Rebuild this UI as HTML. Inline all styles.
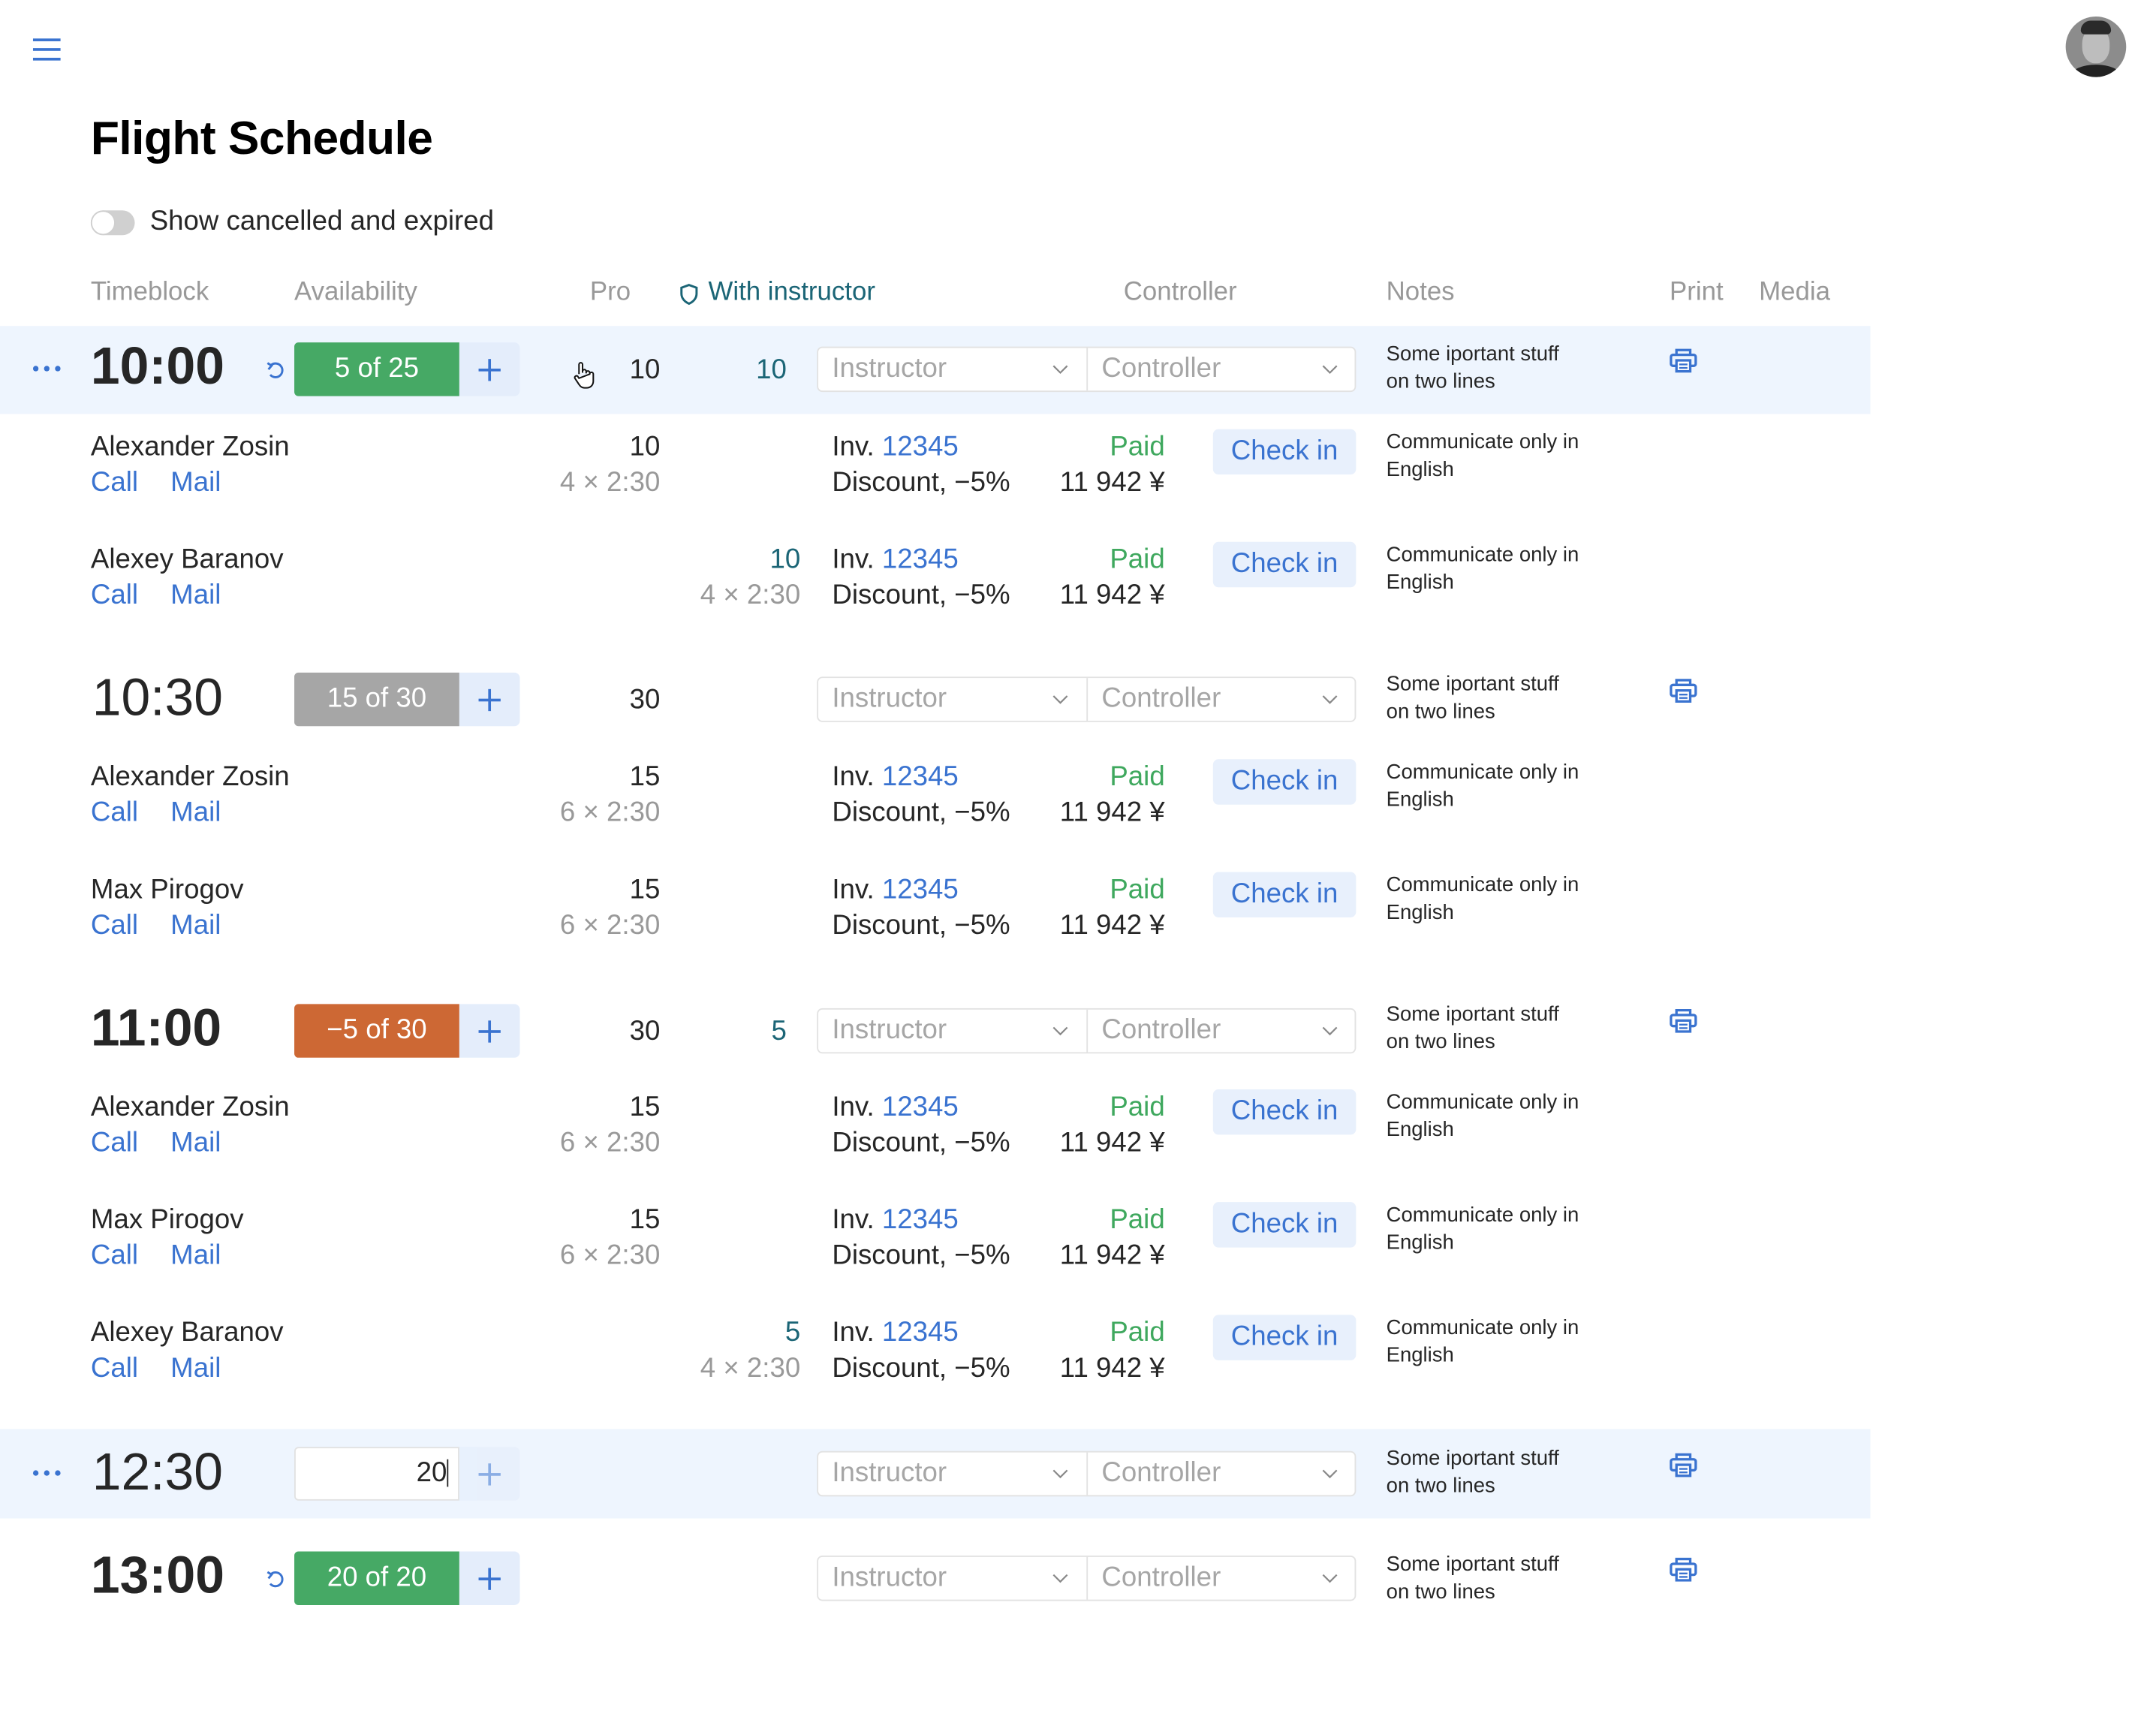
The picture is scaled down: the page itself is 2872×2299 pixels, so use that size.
<!DOCTYPE html>
<html><head><meta charset="utf-8"><style>
html,body{margin:0;padding:0;background:#fff;overflow:hidden}
body{width:2872px;height:2296px}
#w{position:absolute;left:0;top:0;width:1570px;height:1255px;transform:scale(1.832);transform-origin:0 0;font-family:"Liberation Sans",sans-serif;color:#262626}
.a{position:absolute;white-space:nowrap}
.t{position:absolute;white-space:nowrap;font-size:20px;line-height:26px}
.r{text-align:right}
.b{color:#3a73d0}
.g{color:#999}
.tl{color:#1b6576}
.band{position:absolute;left:0;width:1360px;background:#eef5fe}
.dots{position:absolute;left:24px;width:20px;height:4px}
.dots i{position:absolute;top:0;width:4px;height:4px;border-radius:50%;background:#3a73d0}
.time{position:absolute;left:66px;font-size:38px;line-height:40px;letter-spacing:0px}
.pill{position:absolute;left:214px;width:120px;height:39px;border-radius:3px 0 0 3px;color:#fff;font-size:20px;line-height:39px;text-align:center}
.plus{position:absolute;left:334px;width:44px;height:39px;background:#e4edfb;border-radius:0 4px 4px 0}
.plus:before{content:"";position:absolute;left:14px;top:18.5px;width:16px;height:2px;background:#3a73d0}
.plus:after{content:"";position:absolute;left:21px;top:11.5px;width:2px;height:16px;background:#3a73d0}
.sel{position:absolute;left:594px;width:390px;height:31px;border:1px solid #e2e2e2;border-radius:4px;background:#fff}
.sel span{position:absolute;top:2px;font-size:20px;line-height:26px;color:#a6a6a6}
.sel .dv{position:absolute;left:195px;top:0;width:1px;height:31px;background:#e2e2e2}
.sel svg{position:absolute;top:12px}
.note{position:absolute;left:1008px;font-size:15px;line-height:20px;color:#262626}
.ck{position:absolute;left:882px;width:104px;height:33px;background:#e8f0fc;border-radius:4px;color:#3a73d0;font-size:20px;line-height:33px;text-align:center}
.pr{position:absolute;left:1214px}
.rf{position:absolute;left:192px}
</style></head><body><div id="w">

<div class="a" style="left:24px;top:28px;width:20px;height:2px;background:#3a73d0"></div>
<div class="a" style="left:24px;top:35px;width:20px;height:2px;background:#3a73d0"></div>
<div class="a" style="left:24px;top:42px;width:20px;height:2px;background:#3a73d0"></div>

<div class="a" style="left:1502px;top:12px;width:44px;height:44px;border-radius:50%;background:#8c8c8c;overflow:hidden">
<div style="position:absolute;left:12px;top:8px;width:20px;height:26px;border-radius:45%;background:#bdbdbd"></div>
<div style="position:absolute;left:11px;top:3px;width:22px;height:10px;border-radius:10px 10px 4px 4px;background:#2a2a2a"></div>
<div style="position:absolute;left:4px;top:35px;width:36px;height:16px;border-radius:50%;background:#222"></div>
</div>

<div class="a" style="left:66px;top:81px;font-size:34px;line-height:40px;font-weight:bold;color:#000;letter-spacing:-0.3px">Flight Schedule</div>

<div class="a" style="left:66px;top:153px;width:32px;height:18px;border-radius:9px;background:#d0d0d0"></div>
<div class="a" style="left:66px;top:153px;width:16px;height:16px;border-radius:50%;background:#fff;border:1px solid #cfcfcf"></div>
<div class="t" style="left:109px;top:148px">Show cancelled and expired</div>

<div class="t g" style="left:66px;top:200px;font-size:19px">Timeblock</div>
<div class="t g" style="left:214px;top:200px;font-size:19px">Availability</div>
<div class="t g" style="left:429px;top:200px;font-size:19px">Pro</div>
<svg class="a" style="left:494px;top:206px" width="14" height="16" viewBox="0 0 14 16"><path d="M7 1.2 L12.5 3.2 V7.5 C12.5 11 10 13.5 7 14.8 C4 13.5 1.5 11 1.5 7.5 V3.2 Z" fill="none" stroke="#1b6576" stroke-width="1.6"/></svg>
<div class="t tl" style="left:515px;top:200px;font-size:19px">With instructor</div>
<div class="t g" style="left:817px;top:200px;font-size:19px">Controller</div>
<div class="t g" style="left:1008px;top:200px;font-size:19px">Notes</div>
<div class="t g" style="left:1214px;top:200px;font-size:19px">Print</div>
<div class="t g" style="left:1279px;top:200px;font-size:19px">Media</div>

<div class="band" style="top:237px;height:64px"></div>
<div class="band" style="top:1039px;height:65px"></div>

<!-- 10:00 -->
<div class="dots" style="top:266px"><i style="left:0"></i><i style="left:8px"></i><i style="left:16px"></i></div>
<div class="time" style="top:247px;font-weight:bold">10:00</div>
<svg class="rf" style="top:261px" width="16" height="16" viewBox="0 0 16 16"><path d="M5 4.5 A5 5 0 1 1 4.5 11.5" fill="none" stroke="#3a73d0" stroke-width="1.6"/><path d="M2.5 3 L5.5 4.8 L3.2 7.6" fill="none" stroke="#3a73d0" stroke-width="1.6"/></svg>
<div class="pill" style="top:249px;background:#46a965">5 of 25</div>
<div class="plus" style="top:249px"></div>
<svg class="a" style="left:416px;top:262px" width="18" height="22" viewBox="0 0 18 22"><path d="M5 10 V3 a1.3 1.3 0 0 1 2.6 0 V9 M7.6 8 a1.3 1.3 0 0 1 2.6 0 V9.5 M10.2 9 a1.3 1.3 0 0 1 2.6 0 V10 M12.8 10 a1.3 1.3 0 0 1 2.6 0 V15 c0 3 -2 5 -5 5 H9 c-2 0 -3 -1 -4 -2.5 L2 13 a1.3 1.3 0 0 1 2 -1.5 L5 13 Z" fill="#fff" stroke="#111" stroke-width="1.1"/></svg>
<div class="t r" style="left:380px;width:100px;top:256px">10</div>
<div class="t r tl" style="left:472px;width:100px;top:256px">10</div>
<div class="sel" style="top:252px"><span style="left:10px">Instructor</span><svg style="left:170px" width="12" height="8" viewBox="0 0 12 8"><path d="M1 1 L6 6 L11 1" fill="none" stroke="#888" stroke-width="1.2"/></svg><div class="dv"></div><span style="left:206px">Controller</span><svg style="left:366px" width="12" height="8" viewBox="0 0 12 8"><path d="M1 1 L6 6 L11 1" fill="none" stroke="#888" stroke-width="1.2"/></svg></div>
<div class="note" style="top:248px">Some iportant stuff<br>on two lines</div>
<svg class="pr" style="top:253px" width="20" height="18" viewBox="0 0 20 18"><path d="M5 5 V1.5 H15 V5" fill="none" stroke="#3a73d0" stroke-width="1.8"/><path d="M4.5 13 H2.5 a1.5 1.5 0 0 1 -1.5 -1.5 V6.5 a1.5 1.5 0 0 1 1.5 -1.5 H17.5 a1.5 1.5 0 0 1 1.5 1.5 V11.5 a1.5 1.5 0 0 1 -1.5 1.5 H15.5" fill="none" stroke="#3a73d0" stroke-width="1.8"/><rect x="5" y="9" width="10" height="8" fill="#fff" stroke="#3a73d0" stroke-width="1.8"/><path d="M7 12 H13 M7 14.5 H13" stroke="#3a73d0" stroke-width="1.3"/></svg>

<div class="t" style="left:66px;top:312px">Alexander Zosin</div>
<div class="t b" style="left:66px;top:338px">Call</div><div class="t b" style="left:124px;top:338px">Mail</div>
<div class="t r" style="left:380px;width:100px;top:312px">10</div>
<div class="t r g" style="left:360px;width:120px;top:338px">4 × 2:30</div>
<div class="t" style="left:605px;top:312px">Inv. <span class="b">12345</span></div>
<div class="t r" style="left:747px;width:100px;top:312px;color:#3fa85e">Paid</div>
<div class="t" style="left:605px;top:338px">Discount, −5%</div>
<div class="t r" style="left:727px;width:120px;top:338px">11 942 ¥</div>
<div class="ck" style="top:312px">Check in</div>
<div class="note" style="top:312px">Communicate only in<br>English</div>

<div class="t" style="left:66px;top:394px">Alexey Baranov</div>
<div class="t b" style="left:66px;top:420px">Call</div><div class="t b" style="left:124px;top:420px">Mail</div>
<div class="t r tl" style="left:482px;width:100px;top:394px">10</div>
<div class="t r g" style="left:462px;width:120px;top:420px">4 × 2:30</div>
<div class="t" style="left:605px;top:394px">Inv. <span class="b">12345</span></div>
<div class="t r" style="left:747px;width:100px;top:394px;color:#3fa85e">Paid</div>
<div class="t" style="left:605px;top:420px">Discount, −5%</div>
<div class="t r" style="left:727px;width:120px;top:420px">11 942 ¥</div>
<div class="ck" style="top:394px">Check in</div>
<div class="note" style="top:394px">Communicate only in<br>English</div>

<!-- 10:30 -->
<div class="time" style="top:488px;left:67px">10:30</div>
<div class="pill" style="top:489px;background:#a6a6a6">15 of 30</div>
<div class="plus" style="top:489px"></div>
<div class="t r" style="left:380px;width:100px;top:496px">30</div>
<div class="sel" style="top:492px"><span style="left:10px">Instructor</span><svg style="left:170px" width="12" height="8" viewBox="0 0 12 8"><path d="M1 1 L6 6 L11 1" fill="none" stroke="#888" stroke-width="1.2"/></svg><div class="dv"></div><span style="left:206px">Controller</span><svg style="left:366px" width="12" height="8" viewBox="0 0 12 8"><path d="M1 1 L6 6 L11 1" fill="none" stroke="#888" stroke-width="1.2"/></svg></div>
<div class="note" style="top:488px">Some iportant stuff<br>on two lines</div>
<svg class="pr" style="top:493px" width="20" height="18" viewBox="0 0 20 18"><path d="M5 5 V1.5 H15 V5" fill="none" stroke="#3a73d0" stroke-width="1.8"/><path d="M4.5 13 H2.5 a1.5 1.5 0 0 1 -1.5 -1.5 V6.5 a1.5 1.5 0 0 1 1.5 -1.5 H17.5 a1.5 1.5 0 0 1 1.5 1.5 V11.5 a1.5 1.5 0 0 1 -1.5 1.5 H15.5" fill="none" stroke="#3a73d0" stroke-width="1.8"/><rect x="5" y="9" width="10" height="8" fill="#fff" stroke="#3a73d0" stroke-width="1.8"/><path d="M7 12 H13 M7 14.5 H13" stroke="#3a73d0" stroke-width="1.3"/></svg>

<div class="t" style="left:66px;top:552px">Alexander Zosin</div>
<div class="t b" style="left:66px;top:578px">Call</div><div class="t b" style="left:124px;top:578px">Mail</div>
<div class="t r" style="left:380px;width:100px;top:552px">15</div>
<div class="t r g" style="left:360px;width:120px;top:578px">6 × 2:30</div>
<div class="t" style="left:605px;top:552px">Inv. <span class="b">12345</span></div>
<div class="t r" style="left:747px;width:100px;top:552px;color:#3fa85e">Paid</div>
<div class="t" style="left:605px;top:578px">Discount, −5%</div>
<div class="t r" style="left:727px;width:120px;top:578px">11 942 ¥</div>
<div class="ck" style="top:552px">Check in</div>
<div class="note" style="top:552px">Communicate only in<br>English</div>

<div class="t" style="left:66px;top:634px">Max Pirogov</div>
<div class="t b" style="left:66px;top:660px">Call</div><div class="t b" style="left:124px;top:660px">Mail</div>
<div class="t r" style="left:380px;width:100px;top:634px">15</div>
<div class="t r g" style="left:360px;width:120px;top:660px">6 × 2:30</div>
<div class="t" style="left:605px;top:634px">Inv. <span class="b">12345</span></div>
<div class="t r" style="left:747px;width:100px;top:634px;color:#3fa85e">Paid</div>
<div class="t" style="left:605px;top:660px">Discount, −5%</div>
<div class="t r" style="left:727px;width:120px;top:660px">11 942 ¥</div>
<div class="ck" style="top:634px">Check in</div>
<div class="note" style="top:634px">Communicate only in<br>English</div>

<!-- 11:00 -->
<div class="time" style="top:728px;font-weight:bold">11:00</div>
<div class="pill" style="top:730px;background:#cd6834">−5 of 30</div>
<div class="plus" style="top:730px"></div>
<div class="t r" style="left:380px;width:100px;top:737px">30</div>
<div class="t r tl" style="left:472px;width:100px;top:737px">5</div>
<div class="sel" style="top:733px"><span style="left:10px">Instructor</span><svg style="left:170px" width="12" height="8" viewBox="0 0 12 8"><path d="M1 1 L6 6 L11 1" fill="none" stroke="#888" stroke-width="1.2"/></svg><div class="dv"></div><span style="left:206px">Controller</span><svg style="left:366px" width="12" height="8" viewBox="0 0 12 8"><path d="M1 1 L6 6 L11 1" fill="none" stroke="#888" stroke-width="1.2"/></svg></div>
<div class="note" style="top:728px">Some iportant stuff<br>on two lines</div>
<svg class="pr" style="top:733px" width="20" height="18" viewBox="0 0 20 18"><path d="M5 5 V1.5 H15 V5" fill="none" stroke="#3a73d0" stroke-width="1.8"/><path d="M4.5 13 H2.5 a1.5 1.5 0 0 1 -1.5 -1.5 V6.5 a1.5 1.5 0 0 1 1.5 -1.5 H17.5 a1.5 1.5 0 0 1 1.5 1.5 V11.5 a1.5 1.5 0 0 1 -1.5 1.5 H15.5" fill="none" stroke="#3a73d0" stroke-width="1.8"/><rect x="5" y="9" width="10" height="8" fill="#fff" stroke="#3a73d0" stroke-width="1.8"/><path d="M7 12 H13 M7 14.5 H13" stroke="#3a73d0" stroke-width="1.3"/></svg>

<div class="t" style="left:66px;top:792px">Alexander Zosin</div>
<div class="t b" style="left:66px;top:818px">Call</div><div class="t b" style="left:124px;top:818px">Mail</div>
<div class="t r" style="left:380px;width:100px;top:792px">15</div>
<div class="t r g" style="left:360px;width:120px;top:818px">6 × 2:30</div>
<div class="t" style="left:605px;top:792px">Inv. <span class="b">12345</span></div>
<div class="t r" style="left:747px;width:100px;top:792px;color:#3fa85e">Paid</div>
<div class="t" style="left:605px;top:818px">Discount, −5%</div>
<div class="t r" style="left:727px;width:120px;top:818px">11 942 ¥</div>
<div class="ck" style="top:792px">Check in</div>
<div class="note" style="top:792px">Communicate only in<br>English</div>

<div class="t" style="left:66px;top:874px">Max Pirogov</div>
<div class="t b" style="left:66px;top:900px">Call</div><div class="t b" style="left:124px;top:900px">Mail</div>
<div class="t r" style="left:380px;width:100px;top:874px">15</div>
<div class="t r g" style="left:360px;width:120px;top:900px">6 × 2:30</div>
<div class="t" style="left:605px;top:874px">Inv. <span class="b">12345</span></div>
<div class="t r" style="left:747px;width:100px;top:874px;color:#3fa85e">Paid</div>
<div class="t" style="left:605px;top:900px">Discount, −5%</div>
<div class="t r" style="left:727px;width:120px;top:900px">11 942 ¥</div>
<div class="ck" style="top:874px">Check in</div>
<div class="note" style="top:874px">Communicate only in<br>English</div>

<div class="t" style="left:66px;top:956px">Alexey Baranov</div>
<div class="t b" style="left:66px;top:982px">Call</div><div class="t b" style="left:124px;top:982px">Mail</div>
<div class="t r tl" style="left:482px;width:100px;top:956px">5</div>
<div class="t r g" style="left:462px;width:120px;top:982px">4 × 2:30</div>
<div class="t" style="left:605px;top:956px">Inv. <span class="b">12345</span></div>
<div class="t r" style="left:747px;width:100px;top:956px;color:#3fa85e">Paid</div>
<div class="t" style="left:605px;top:982px">Discount, −5%</div>
<div class="t r" style="left:727px;width:120px;top:982px">11 942 ¥</div>
<div class="ck" style="top:956px">Check in</div>
<div class="note" style="top:956px">Communicate only in<br>English</div>

<!-- 12:30 -->
<div class="dots" style="top:1069px"><i style="left:0"></i><i style="left:8px"></i><i style="left:16px"></i></div>
<div class="time" style="top:1051px;left:67px">12:30</div>
<div class="a" style="left:214px;top:1052px;width:118px;height:37px;border:1px solid #e2e2e2;border-radius:3px 0 0 3px;background:#fff"></div>
<div class="t r" style="left:214px;width:111px;top:1058px">20</div>
<div class="a" style="left:325px;top:1061px;width:1px;height:20px;background:#222"></div>
<div class="plus" style="top:1052px;opacity:0.55"></div>
<div class="sel" style="top:1055px"><span style="left:10px">Instructor</span><svg style="left:170px" width="12" height="8" viewBox="0 0 12 8"><path d="M1 1 L6 6 L11 1" fill="none" stroke="#888" stroke-width="1.2"/></svg><div class="dv"></div><span style="left:206px">Controller</span><svg style="left:366px" width="12" height="8" viewBox="0 0 12 8"><path d="M1 1 L6 6 L11 1" fill="none" stroke="#888" stroke-width="1.2"/></svg></div>
<div class="note" style="top:1051px">Some iportant stuff<br>on two lines</div>
<svg class="pr" style="top:1056px" width="20" height="18" viewBox="0 0 20 18"><path d="M5 5 V1.5 H15 V5" fill="none" stroke="#3a73d0" stroke-width="1.8"/><path d="M4.5 13 H2.5 a1.5 1.5 0 0 1 -1.5 -1.5 V6.5 a1.5 1.5 0 0 1 1.5 -1.5 H17.5 a1.5 1.5 0 0 1 1.5 1.5 V11.5 a1.5 1.5 0 0 1 -1.5 1.5 H15.5" fill="none" stroke="#3a73d0" stroke-width="1.8"/><rect x="5" y="9" width="10" height="8" fill="#fff" stroke="#3a73d0" stroke-width="1.8"/><path d="M7 12 H13 M7 14.5 H13" stroke="#3a73d0" stroke-width="1.3"/></svg>

<!-- 13:00 -->
<div class="time" style="top:1126px;font-weight:bold">13:00</div>
<svg class="rf" style="top:1140px" width="16" height="16" viewBox="0 0 16 16"><path d="M5 4.5 A5 5 0 1 1 4.5 11.5" fill="none" stroke="#3a73d0" stroke-width="1.6"/><path d="M2.5 3 L5.5 4.8 L3.2 7.6" fill="none" stroke="#3a73d0" stroke-width="1.6"/></svg>
<div class="pill" style="top:1128px;background:#46a965">20 of 20</div>
<div class="plus" style="top:1128px"></div>
<div class="sel" style="top:1131px"><span style="left:10px">Instructor</span><svg style="left:170px" width="12" height="8" viewBox="0 0 12 8"><path d="M1 1 L6 6 L11 1" fill="none" stroke="#888" stroke-width="1.2"/></svg><div class="dv"></div><span style="left:206px">Controller</span><svg style="left:366px" width="12" height="8" viewBox="0 0 12 8"><path d="M1 1 L6 6 L11 1" fill="none" stroke="#888" stroke-width="1.2"/></svg></div>
<div class="note" style="top:1128px">Some iportant stuff<br>on two lines</div>
<svg class="pr" style="top:1132px" width="20" height="18" viewBox="0 0 20 18"><path d="M5 5 V1.5 H15 V5" fill="none" stroke="#3a73d0" stroke-width="1.8"/><path d="M4.5 13 H2.5 a1.5 1.5 0 0 1 -1.5 -1.5 V6.5 a1.5 1.5 0 0 1 1.5 -1.5 H17.5 a1.5 1.5 0 0 1 1.5 1.5 V11.5 a1.5 1.5 0 0 1 -1.5 1.5 H15.5" fill="none" stroke="#3a73d0" stroke-width="1.8"/><rect x="5" y="9" width="10" height="8" fill="#fff" stroke="#3a73d0" stroke-width="1.8"/><path d="M7 12 H13 M7 14.5 H13" stroke="#3a73d0" stroke-width="1.3"/></svg>

</div></body></html>
